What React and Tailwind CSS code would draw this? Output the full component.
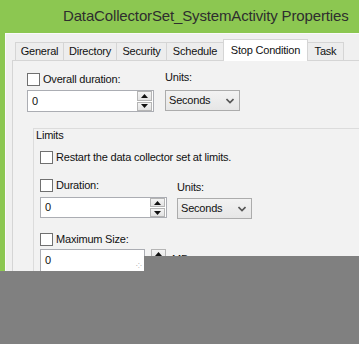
import React from "react";

const Check = () => (
  <div className="w-[13px] h-[13px] shrink-0 border border-[#707070] bg-white" />
);

const SpinBtn = ({ up }) => (
  <div className="flex-1 flex items-center justify-center border border-[#b5b5b5] bg-gradient-to-b from-[#f4f4f4] to-[#e3e3e3]">
    <svg width="7" height="4" viewBox="0 0 7 4">
      {up ? <path d="M3.5 0 L7 4 L0 4 Z" fill="#111" /> : <path d="M0 0 L7 0 L3.5 4 Z" fill="#111" />}
    </svg>
  </div>
);

const Spinner = ({ className }) => (
  <div className={"flex flex-col gap-[1px] w-[15px] " + className}>
    <SpinBtn up />
    <SpinBtn />
  </div>
);

const Select = () => (
  <div className="w-[75px] h-[21px] border border-[#acacac] bg-gradient-to-b from-[#f2f2f2] to-[#e6e6e6] flex items-center pl-[3px] pr-[5px] justify-between">
    <span className="text-[#111]">Seconds</span>
    <svg width="8" height="6" viewBox="0 0 8 6">
      <path d="M0.5 1 L4 4.5 L7.5 1" stroke="#555" strokeWidth="1.6" fill="none" />
    </svg>
  </div>
);

export default function App() {
  return (
    <div
      className="relative w-[359px] h-[344px] overflow-hidden bg-[#8cc751] text-[11px] tracking-[-0.2px] text-[#111]"
      style={{ fontFamily: '"Liberation Sans", Arial, sans-serif' }}
    >
      <div className="h-[33px] pl-[63px] flex items-center text-[15px] tracking-[-0.15px] text-[#2e2e2e] whitespace-nowrap">
        DataCollectorSet_SystemActivity Properties
      </div>
      <div className="ml-[5px] h-[311px] border-l border-t border-[#fafafa] bg-[#f0f0f0] pl-[6px] pt-[5px]">
        <div className="flex items-end h-[21px] pl-[3px] leading-[13px]">
          <div className="w-[49px] h-[18px] border border-b-0 border-[#d5d5d5] bg-[#ededed] flex items-center justify-center">General</div>
          <div className="-ml-px w-[54px] h-[18px] border border-b-0 border-[#d5d5d5] bg-[#ededed] flex items-center justify-center">Directory</div>
          <div className="-ml-px w-[51px] h-[18px] border border-b-0 border-[#d5d5d5] bg-[#ededed] flex items-center justify-center">Security</div>
          <div className="-ml-px w-[58px] h-[18px] border border-b-0 border-[#d5d5d5] bg-[#ededed] flex items-center justify-center">Schedule</div>
          <div className="relative z-10 -ml-px -mb-px w-[85px] h-[22px] border border-b-0 border-[#d5d5d5] bg-white flex items-center justify-center pb-[1px]">Stop Condition</div>
          <div className="-ml-px w-[37px] h-[18px] border border-b-0 border-[#d5d5d5] bg-[#ededed] flex items-center justify-center">Task</div>
        </div>
        <div className="h-[300px] border-t border-l border-[#d5d5d5] bg-[#f2f2f2] pl-[14px] pt-[12px] leading-[13px] whitespace-nowrap">
          <div className="flex items-start">
            <div className="w-[138px] flex flex-col">
              <div className="flex items-center gap-[3px] h-[13px]">
                <Check />
                <span>Overall duration:</span>
              </div>
              <div className="mt-[4px] w-[127px] h-[22px] border border-[#abadb3] bg-white flex items-center">
                <span className="flex-1 pl-[4px]">0</span>
                <Spinner className="h-[20px] mr-px" />
              </div>
            </div>
            <div className="-mt-[2px] flex flex-col">
              <div className="h-[13px]">Units:</div>
              <div className="mt-[6px]"><Select /></div>
            </div>
          </div>

          <div className="mt-[16px] ml-[6px] h-[200px] border-t border-l border-[#dcdcdc] pl-[1px]">
            <div className="h-[13px] ml-[1px]">Limits</div>
            <div className="pl-[5px]">
              <div className="mt-[9px] flex items-center gap-[3px] h-[13px]">
                <Check />
                <span>Restart the data collector set at limits.</span>
              </div>
              <div className="mt-[15px] flex items-start">
                <div className="w-[137px] flex flex-col">
                  <div className="flex items-center gap-[3px] h-[13px]">
                    <Check />
                    <span>Duration:</span>
                  </div>
                  <div className="mt-[5px] w-[127px] h-[21px] border border-[#abadb3] bg-white flex items-center">
                    <span className="flex-1 pl-[4px]">0</span>
                    <Spinner className="h-[19px] mr-px" />
                  </div>
                </div>
                <div className="mt-[2px] flex flex-col">
                  <div className="h-[13px]">Units:</div>
                  <div className="mt-[4px]"><Select /></div>
                </div>
              </div>
              <div className="mt-[14px] flex items-center gap-[3px] h-[13px]">
                <Check />
                <span>Maximum Size:</span>
              </div>
              <div className="mt-[3px] flex items-start">
                <div className="relative w-[105px] h-[23px] border border-[#abadb3] bg-white flex items-center">
                  <span className="flex-1 pl-[4px]">0</span>
                  <span className="absolute right-[2px] bottom-[2px] text-[7px] leading-[7px] text-[#888]">⁘</span>
                </div>
                <Spinner className="ml-[6px] h-[22px]" />
                <span className="ml-[6px] mt-[4px]">MB</span>
              </div>
            </div>
          </div>
        </div>
      </div>
      <div className="absolute left-[144px] top-[256px] right-0 bottom-0 bg-[#808080]" />
      <div className="absolute left-0 top-[271px] right-0 bottom-0 bg-[#808080]" />
    </div>
  );
}
